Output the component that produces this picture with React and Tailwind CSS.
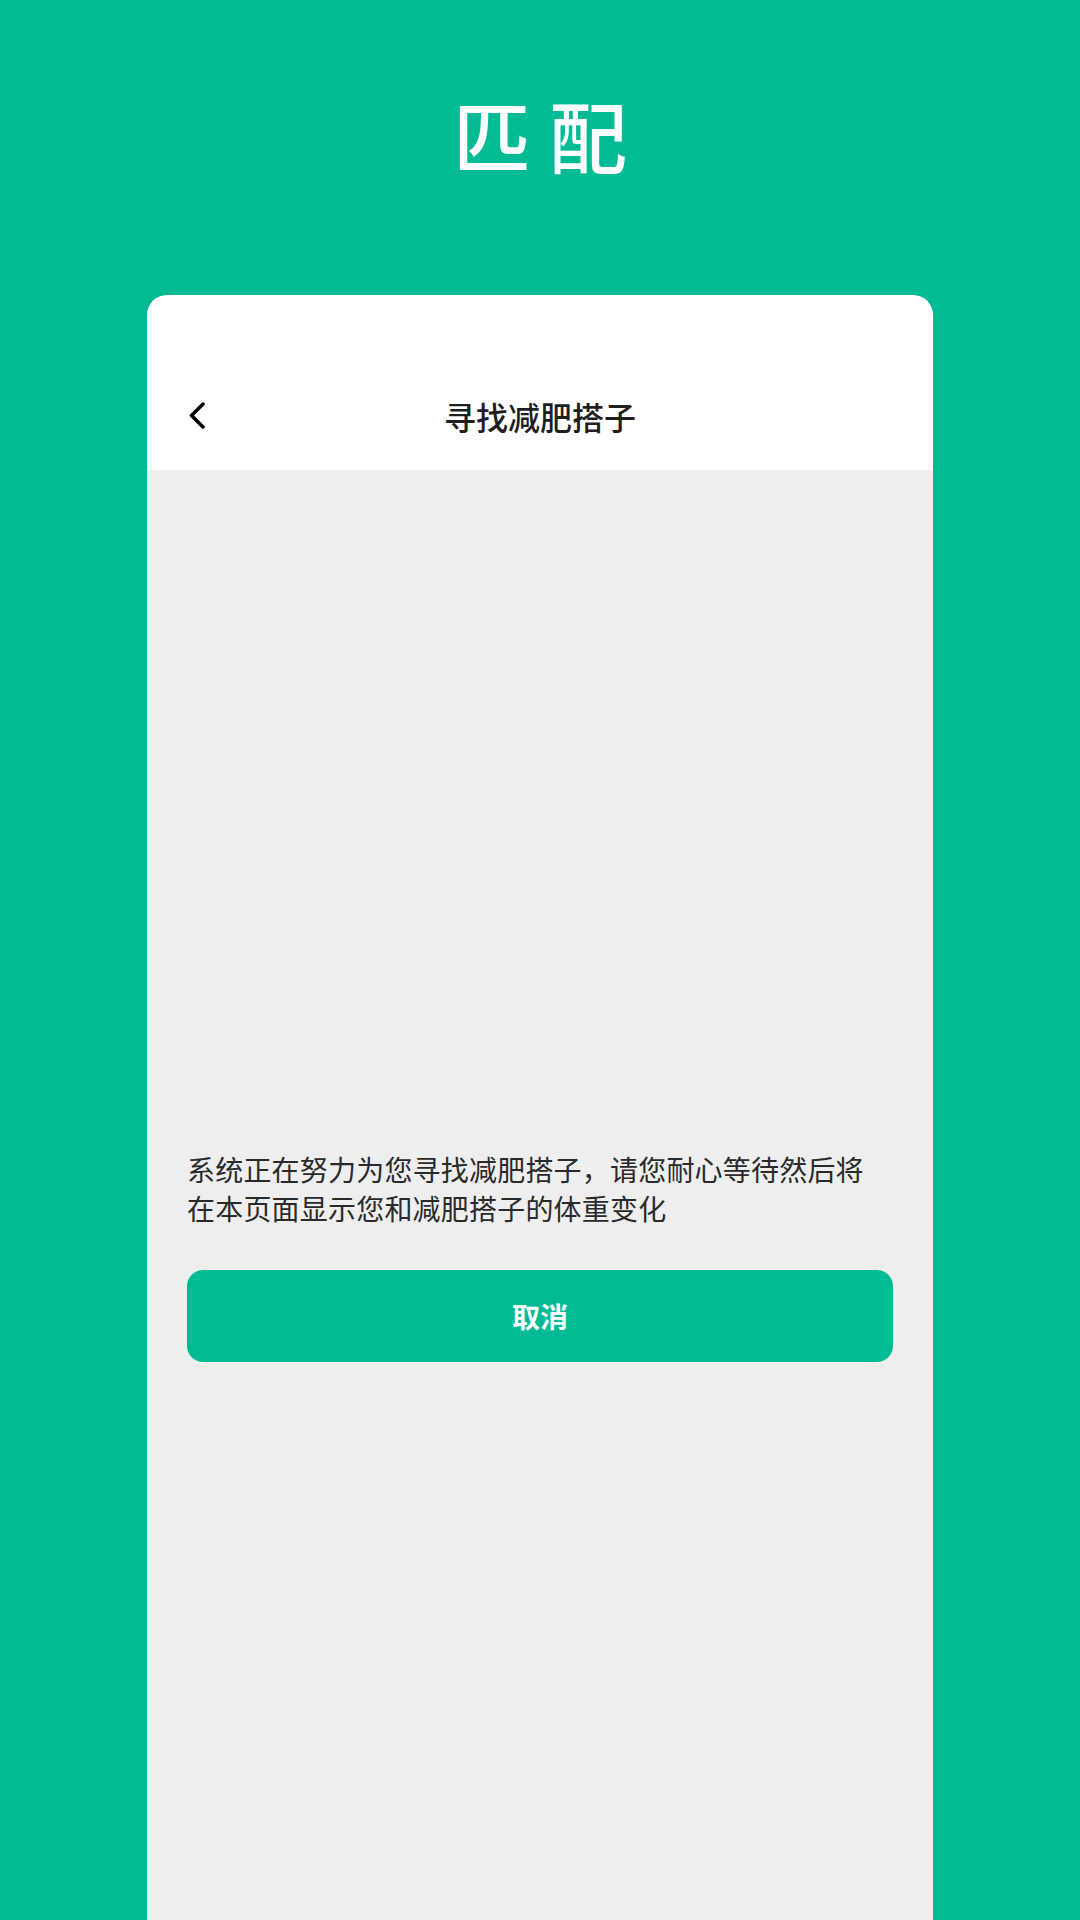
export default function App() {
  return (
    <div className="h-[1920px] overflow-hidden bg-[#00bb94] flex flex-col items-center font-['Noto_Sans_CJK_SC','Noto_Sans',sans-serif]">
      {/* Page title */}
      <h1 className="pt-[95px] text-[78px] leading-none font-medium text-white tracking-[18px] pl-[18px]">
        匹配
      </h1>

      {/* Card */}
      <div className="mt-[122px] w-[786px] flex-1 rounded-t-[20px] overflow-hidden flex flex-col">
        {/* Header */}
        <div className="bg-white pt-[66px]">
          <div className="h-[109px] grid grid-cols-[1fr_auto_1fr] items-center px-[41px]">
            <button className="justify-self-start">
              <svg width="18" height="27" viewBox="0 0 18 27" fill="none">
                <polyline
                  points="15,2 3.5,13.5 15,25"
                  stroke="#000000"
                  strokeWidth="3.5"
                  strokeLinecap="round"
                  strokeLinejoin="round"
                />
              </svg>
            </button>
            <span className="text-[32px] leading-none font-medium text-[#1f1f1f]">
              寻找减肥搭子
            </span>
            <span />
          </div>
        </div>

        {/* Body */}
        <div className="flex-1 bg-[#eeeeee] px-[40px] pt-[680px]">
          <p className="w-[690px] text-[28px] leading-[39px] tracking-[0.2px] text-[#2a2a2a]">
            系统正在努力为您寻找减肥搭子，请您耐心等待然后将在本页面显示您和减肥搭子的体重变化
          </p>
          <button className="mt-[42px] w-full h-[92px] rounded-[16px] bg-[#00bb94] text-white text-[28px] font-semibold">
            取消
          </button>
        </div>
      </div>
    </div>
  );
}
